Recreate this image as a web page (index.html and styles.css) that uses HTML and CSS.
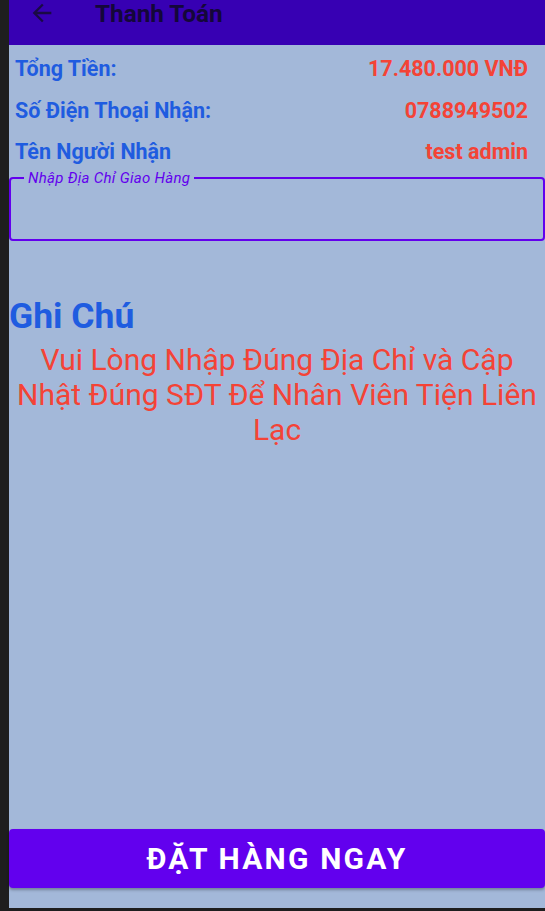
FILE: index.html
```html
<!DOCTYPE html>
<html lang="vi">
<head>
<meta charset="utf-8">
<title>Thanh Toán</title>
<link rel="stylesheet" href="styles.css">
</head>
<body>
<div class="screen">
  <div class="editor-strip"></div>
  <div class="app">
    <header class="topbar">
      <svg class="back" viewBox="0 0 24 24" width="28" height="28" aria-hidden="true">
        <path d="M20 11H7.83l5.59-5.59L12 4l-8 8 8 8 1.41-1.41L7.83 13H20v-2z"/>
      </svg>
      <h1 class="title">Thanh Toán</h1>
    </header>
    <main class="content">
      <div class="info">
        <div class="row"><span class="label">Tổng Tiền:</span><span class="value">17.480.000 VNĐ</span></div>
        <div class="row"><span class="label">Số Điện Thoại Nhận:</span><span class="value">0788949502</span></div>
        <div class="row"><span class="label">Tên Người Nhận</span><span class="value">test admin</span></div>
      </div>
      <div class="field">
        <span class="field-label">Nhập Địa Chỉ Giao Hàng</span>
      </div>
      <h2 class="note-title">Ghi Chú</h2>
      <p class="note">Vui Lòng Nhập Đúng Địa Chỉ và Cập Nhật Đúng SĐT Để Nhân Viên Tiện Liên Lạc</p>
      <div class="spacer"></div>
      <button class="order">ĐẶT HÀNG NGAY</button>
    </main>
  </div>
</div>
</body>
</html>
```
FILE: styles.css
```css
* { box-sizing: border-box; }
html, body { margin: 0; padding: 0; }
body {
  background: #1e1e1e;
  font-family: Roboto, "Noto Sans", sans-serif;
  width: 545px;
  height: 911px;
  overflow: hidden;
}
.screen {
  display: grid;
  grid-template-columns: 9px 1fr;
  height: 908px;
}
.editor-strip {
  background: #1e1e1e;
}
.app {
  background: #a3b8d9;
  display: flex;
  flex-direction: column;
  height: 908px;
}
.topbar {
  height: 45px;
  background: #3700b3;
  display: flex;
  align-items: flex-start;
  padding-left: 19px;
  flex-shrink: 0;
}
.back {
  fill: #1a0a45;
  margin-top: -1px;
}
.title {
  margin: 0 0 0 39px;
  font-size: 24.3px;
  font-weight: 700;
  line-height: 28px;
  color: #14073a;
}
.content {
  flex: 1;
  display: flex;
  flex-direction: column;
}
.info {
  display: flex;
  flex-direction: column;
  gap: 15.5px;
  padding: 11px 17px 0 6px;
}
.row {
  display: flex;
  justify-content: space-between;
  font-size: 21.5px;
  font-weight: 700;
  line-height: 26px;
}
.label { color: #1f5ce0; }
.value { color: #f44336; }
.field {
  position: relative;
  margin-top: 12px;
  height: 64px;
  border: 2px solid #6200ee;
  border-radius: 4px;
}
.field-label {
  position: absolute;
  left: 13px;
  top: -10px;
  padding: 0 4px;
  background: #a3b8d9;
  font-size: 15px;
  font-style: italic;
  line-height: 18px;
  color: #6200ee;
  letter-spacing: 0.3px;
}
.note-title {
  margin: 54px 0 0 0;
  font-size: 35.5px;
  font-weight: 700;
  line-height: 42px;
  color: #1f5ce0;
}
.note {
  margin: 5px 0 0;
  padding: 0 8px;
  text-align: center;
  font-size: 30px;
  line-height: 35px;
  color: #f44336;
}
.spacer { flex: 1; }
.order {
  margin-bottom: 20px;
  height: 59px;
  border: none;
  border-radius: 4px;
  background: #6200ee;
  color: #ffffff;
  font-family: Roboto, "Noto Sans", sans-serif;
  font-size: 30px;
  font-weight: 700;
  letter-spacing: 2.2px;
  box-shadow: 0 2px 3px rgba(0, 0, 0, 0.3);
}
```
